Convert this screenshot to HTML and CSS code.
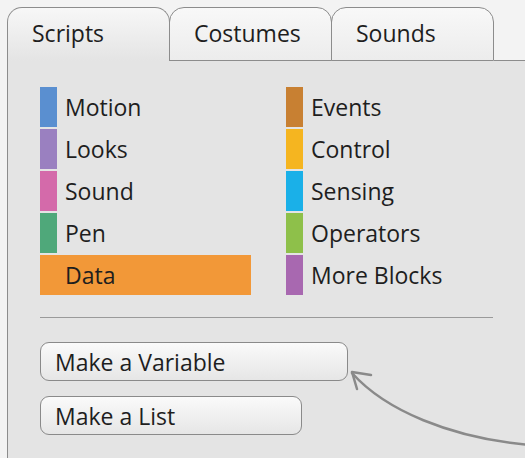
FILE: index.html
```html
<!DOCTYPE html>
<html lang="en">
<head>
    <meta charset="UTF-8">
    <title>Scripts</title>
    <link rel="stylesheet" href="styles.css">
</head>
<body>

<div class="window">
    <div class="tabs">
        <div class="tab active">Scripts</div>
        <div class="tab">Costumes</div>
        <div class="tab">Sounds</div>
        <div class="tab-fill"></div>
    </div>

    <div class="panel">
        <div class="categories">
            <div class="category"><span class="swatch motion"></span>Motion</div>
            <div class="category"><span class="swatch looks"></span>Looks</div>
            <div class="category"><span class="swatch sound"></span>Sound</div>
            <div class="category"><span class="swatch pen"></span>Pen</div>
            <div class="category selected"><span class="swatch data"></span>Data</div>
            <div class="category"><span class="swatch events"></span>Events</div>
            <div class="category"><span class="swatch control"></span>Control</div>
            <div class="category"><span class="swatch sensing"></span>Sensing</div>
            <div class="category"><span class="swatch operators"></span>Operators</div>
            <div class="category"><span class="swatch more"></span>More Blocks</div>
        </div>

        <hr class="divider">

        <div class="actions">
            <button class="make-btn variable">Make a Variable</button>
            <button class="make-btn list">Make a List</button>
        </div>
    </div>

    <!-- callout arrow pointing at the button -->
    <svg class="arrow" width="525" height="458" viewBox="0 0 525 458">
        <path d="M352 373 C385 410 450 438 530 445" fill="none" stroke="#8a8a8a" stroke-width="2.5" stroke-linecap="round"/>
        <path d="M371 375 L352 372 L357 389" fill="none" stroke="#8a8a8a" stroke-width="2.5" stroke-linecap="round" stroke-linejoin="round"/>
    </svg>
</div>

</body>
</html>
```

FILE: styles.css
```css
body {
    margin: 0;
    background-color: #f3f3f3;
    font-family: 'Open Sans', sans-serif;
    color: #1e1e1e;
    overflow: hidden;
}

.window {
    position: relative;
    height: 458px;
    display: flex;
    flex-direction: column;
}

.tabs {
    display: flex;
    padding-top: 7px;
    margin-left: 7px;
}

.tab {
    box-sizing: border-box;
    width: 163px;
    height: 54px;
    padding: 9px 0 0 24px;
    font-size: 23px;
    border: 1px solid #8c8c8c;
    border-radius: 15px 15px 0 0;
    background: linear-gradient(#f8f8f8, #ececec);
}

.tab + .tab {
    margin-left: -1px;
}

.tab.active {
    border-bottom: none;
    background: linear-gradient(#f7f7f7, #e4e4e4);
}

.tab-fill {
    flex: 1;
    border-bottom: 1px solid #8c8c8c;
}

.panel {
    flex: 1;
    margin-left: 7px;
    border-left: 1px solid #8c8c8c;
    background-color: #e4e4e4;
    padding: 26px 0 0 32px;
}

.categories {
    display: grid;
    grid-auto-flow: column;
    grid-template-rows: repeat(5, 40px);
    grid-template-columns: 211px 200px;
    row-gap: 2px;
    column-gap: 35px;
}

.category {
    display: flex;
    align-items: center;
    font-size: 23px;
}

.swatch {
    width: 17px;
    height: 100%;
    margin-right: 8px;
}

.category.selected {
    background-color: #f29838;
}

.motion { background-color: #5a8fd0; }
.looks { background-color: #9a80c0; }
.sound { background-color: #d46aaa; }
.pen { background-color: #4fa87a; }
.data { background-color: #f29838; }
.events { background-color: #c88032; }
.control { background-color: #f5b520; }
.sensing { background-color: #1ab0e8; }
.operators { background-color: #8ec04a; }
.more { background-color: #a868b0; }

.divider {
    width: 453px;
    margin: 22px 0 24px;
    border: none;
    border-top: 1px solid #9a9a9a;
}

.actions {
    display: flex;
    flex-direction: column;
    align-items: flex-start;
    gap: 15px;
}

.make-btn {
    box-sizing: border-box;
    height: 39px;
    padding: 0 0 0 14px;
    text-align: left;
    font-family: 'Open Sans', sans-serif;
    font-size: 23px;
    color: #1e1e1e;
    border: 1px solid #8a8a8a;
    border-radius: 9px;
    background: linear-gradient(#fafafa, #e6e6e6);
}

.make-btn.variable {
    width: 308px;
}

.make-btn.list {
    width: 262px;
}

.arrow {
    position: absolute;
    top: 0;
    left: 0;
    pointer-events: none;
}
```
